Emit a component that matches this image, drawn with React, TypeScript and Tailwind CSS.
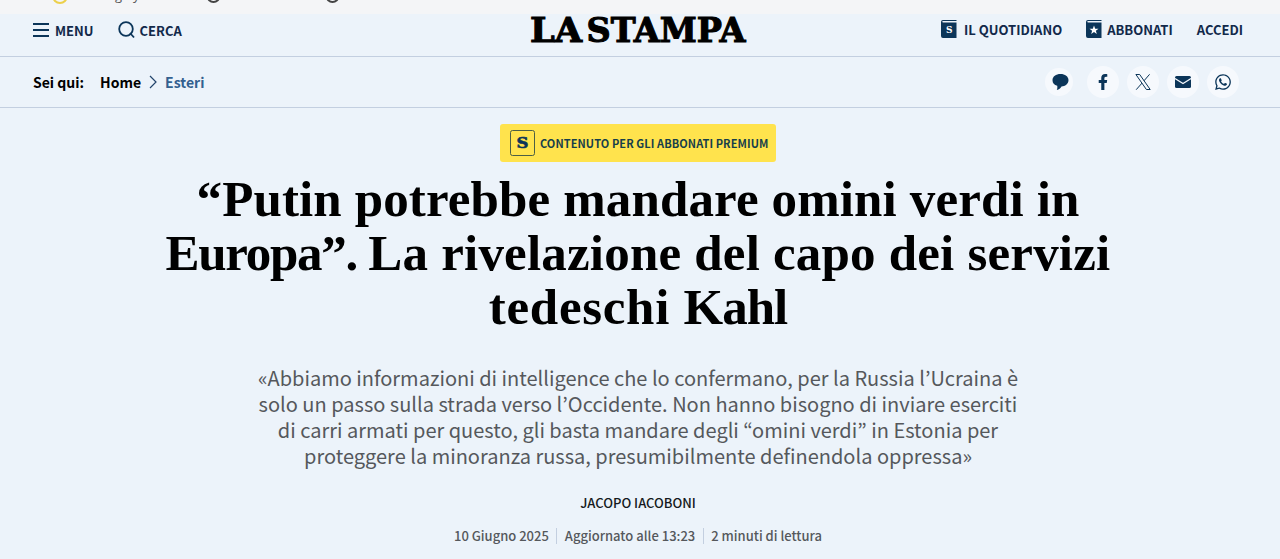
import React from 'react';
import { FaFacebookF, FaWhatsapp } from 'react-icons/fa';

const titleLines = [
    [{ text: '“Putin potrebbe mandare omini verdi in', tracking: 'tracking-[0.13px]' }],
    [
        { text: 'Europa”. ', tracking: 'tracking-[-1.3px]' },
        { text: 'La rivelazione del capo dei servizi', tracking: 'tracking-[0.2px]' },
    ],
    [
        { text: 'tedeschi ', tracking: 'tracking-[0.7px]' },
        { text: 'Kahl', tracking: 'tracking-[-1px]' },
    ],
];

const summaryLines = [
    '«Abbiamo informazioni di intelligence che lo confermano, per la Russia l’Ucraina è',
    'solo un passo sulla strada verso l’Occidente. Non hanno bisogno di inviare eserciti',
    'di carri armati per questo, gli basta mandare degli “omini verdi” in Estonia per',
    'proteggere la minoranza russa, presumibilmente definendola oppressa»',
];

function Logo() {
    return (
        <svg width="218" height="30" viewBox="0 0 218 30" stroke="#000" strokeWidth="1.1" className="font-['DejaVu_Serif',serif] font-bold text-[33.5px]">
            <text x="1" y="26.500" textLength="52" lengthAdjust="spacingAndGlyphs">LA</text>
            <text x="57.500" y="26.500" textLength="159" lengthAdjust="spacingAndGlyphs">STAMPA</text>
        </svg>
    );
}

// Small book shape used by the links on the right of the header
function BookIcon({ children }: { children: React.ReactNode }) {
    return (
        <svg width="16" height="18" viewBox="0 0 16 18" className="mb-[2px]">
            <path d="M2 0H15.500V1H2.200Q1.200 1.200 1.200 1.800T2.200 2.600H15.500V18H2Q0 18 0 16V2Q0 0 2 0Z" fill="#0b3559" />
            {children}
        </svg>
    );
}

function ShareButton({ children, small }: { children: React.ReactNode; small?: boolean }) {
    return (
        <a className={`flex items-center justify-center rounded-full bg-[#f6f9fd] ${small ? 'size-7 mr-[6px]' : 'size-8'}`}>
            {children}
        </a>
    );
}

export default function App() {
    return (
        <div className="w-[1280px] h-[559px] overflow-hidden bg-[#ecf3fa] text-black font-['Noto_Sans_CJK_KR','Noto_Sans',sans-serif]">
            {/* Bottom edge of the bar above the page */}
            <div className="h-[14px] bg-[#f4f5f7]">
                <svg width="400" height="14" viewBox="0 0 400 14" fill="none" strokeWidth="2">
                    <circle cx="60" cy="-4" r="7" stroke="#ecd04b" />
                    <text x="115" y="0" fill="#555" className="font-['Open_Sans',sans-serif] text-[13px]">g</text>
                    <text x="133" y="0" fill="#555" className="font-['Open_Sans',sans-serif] text-[13px]">y</text>
                    <circle cx="213.500" cy="-4" r="6" stroke="#444" />
                    <circle cx="332.500" cy="-4" r="6" stroke="#444" />
                </svg>
            </div>

            <header className="h-[43px] border-b border-[#c3cfe0] grid grid-cols-[1fr_218px_1fr] pl-[33px] pr-[37px] text-[13px] leading-4 font-bold text-[#12294a]">
                <div className="flex items-center h-[33px]">
                    <svg width="16" height="14" viewBox="0 0 16 14" className="mr-[6px] mb-[2px]" stroke="#0b3559" strokeWidth="2">
                        <path d="M0 1H16M0 7H16M0 13H16" />
                    </svg>
                    <span>MENU</span>
                    <svg width="17" height="18" viewBox="0 0 17 18" className="ml-6 mr-[5px] mb-[2px]" fill="none" stroke="#0b3559" strokeWidth="1.800">
                        <circle cx="8" cy="8" r="6.800" />
                        <path d="M12 12L16 16.500" />
                    </svg>
                    <span>CERCA</span>
                </div>
                <div className="pt-[1px]"><Logo /></div>
                <div className="flex items-center justify-end h-8">
                    <BookIcon>
                        <text x="8.200" y="13.300" textAnchor="middle" fill="#fff" className="font-['DejaVu_Serif',serif] font-bold text-[9px]">S</text>
                    </BookIcon>
                    <span className="ml-[7px] mr-6">IL QUOTIDIANO</span>
                    <BookIcon>
                        <path d="M8 5.500L9.200 8.800H12.500L9.900 10.800L10.800 14L8 12.100L5.200 14L6.100 10.800L3.500 8.800H6.800Z" fill="#fff" />
                    </BookIcon>
                    <span className="ml-[5px] mr-6">ABBONATI</span>
                    <span>ACCEDI</span>
                </div>
            </header>

            <nav className="h-[51px] border-b border-[#c3cfe0] flex items-center justify-between pl-[33px] pr-[41px] text-[14px] font-bold">
                <div className="flex items-center">
                    <span className="mr-4">Sei qui:</span>
                    <span>Home</span>
                    <svg width="8" height="14" viewBox="0 0 8 14" className="mx-2" fill="none" stroke="#23446b" strokeWidth="1.200">
                        <path d="M1 1L7 7L1 13" />
                    </svg>
                    <span className="text-[#33608f]">Esteri</span>
                </div>
                <div className="flex items-center gap-2 text-[#0b3559]">
                    <ShareButton small>
                        <svg width="17" height="16" viewBox="0 0 17 16" fill="currentColor" className="ml-[3px]">
                            <path d="M8.500 0C13 0 16.500 2.500 16.500 6.200S13 12.300 9.500 12.400C8.500 14 7 15.300 4.800 16C5.400 14.800 5.500 13.300 5.200 11.800C2.200 11 .5 8.900 .5 6.200C.5 2.500 4 0 8.500 0Z" />
                        </svg>
                    </ShareButton>
                    <ShareButton><FaFacebookF size={16} /></ShareButton>
                    <ShareButton>
                        <svg width="16" height="16" viewBox="0 0 16 16" fill="none" stroke="currentColor" strokeWidth="1">
                            <path d="M.9 .5H4.700L15.200 15.500H11.400Z" />
                            <path d="M14.600 .3L9 6.800M7 9.100L1.200 15.700" />
                        </svg>
                    </ShareButton>
                    <ShareButton>
                        <svg width="16" height="12" viewBox="0 0 16 12">
                            <rect width="16" height="12" rx="1.500" fill="currentColor" />
                            <path d="M0 2.500L8 7.500L16 2.500" fill="none" stroke="#f6f9fd" strokeWidth="1.200" />
                        </svg>
                    </ShareButton>
                    <ShareButton><FaWhatsapp size={18} /></ShareButton>
                </div>
            </nav>

            <main className="w-[1276px] pt-4 flex flex-col items-center text-center">
                <div className="w-[276px] h-[38px] rounded-[3px] bg-[#ffe34d] flex items-center pl-[10px] text-[11px] tracking-[0.08px] font-bold text-[#173f4a] whitespace-nowrap">
                    <svg width="25" height="26" viewBox="0 0 25 26" className="mr-[5px]">
                        <rect x=".5" y=".5" width="24" height="25" rx="2" fill="none" stroke="#4c5f45" />
                        <text x="12.500" y="18" textAnchor="middle" fill="#0b3559" stroke="#0b3559" strokeWidth=".6" textLength="12" lengthAdjust="spacingAndGlyphs" className="font-['DejaVu_Serif',serif] font-bold text-[15px]">S</text>
                    </svg>
                    <span className="pt-px">CONTENUTO PER GLI ABBONATI PREMIUM</span>
                </div>

                <h1 className="mt-[10px] font-['Liberation_Serif',serif] font-bold text-[51px] leading-[54px]">
                    {titleLines.map((parts, i) => (
                        <span key={i} className="block whitespace-pre">
                            {parts.map(p => <span key={p.text} className={p.tracking}>{p.text}</span>)}
                        </span>
                    ))}
                </h1>

                <p className="mt-[31px] text-[20px] leading-[26px] text-[#55585c]">
                    {summaryLines.map(l => <span key={l} className="block whitespace-nowrap">{l}</span>)}
                </p>

                <p className="mt-[25px] text-[13px] leading-[18px] font-medium text-[#151a20]">JACOPO IACOBONI</p>
                <div className="mt-[15px] flex items-center text-[13px] leading-[18px] font-medium text-[#55585c]">
                    <span>10 Giugno 2025</span>
                    <span className="mx-[7.500px] w-px h-4 bg-[#c3cfe0]" />
                    <span>Aggiornato alle 13:23</span>
                    <span className="mx-[7.500px] w-px h-4 bg-[#c3cfe0]" />
                    <span>2 minuti di lettura</span>
                </div>
            </main>
        </div>
    );
}
